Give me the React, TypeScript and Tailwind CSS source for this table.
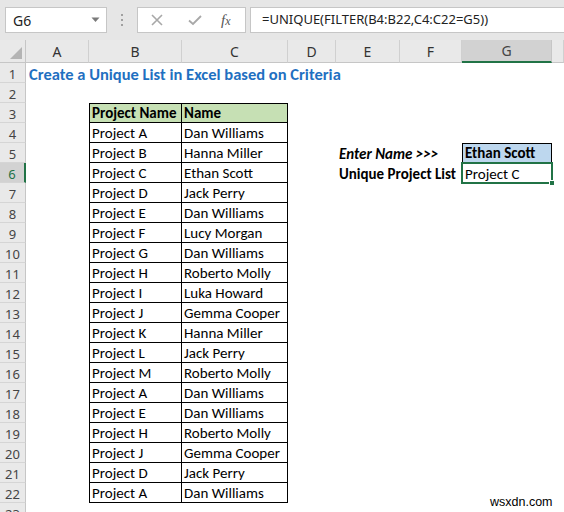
import React from "react";

const COLS = [63, 93, 106, 48, 64, 62, 90, 12];
const LETTERS = ["A", "B", "C", "D", "E", "F", "G", ""];

const data: [string, string][] = [
  ["Project A", "Dan Williams"],
  ["Project B", "Hanna Miller"],
  ["Project C", "Ethan Scott"],
  ["Project D", "Jack Perry"],
  ["Project E", "Dan Williams"],
  ["Project F", "Lucy Morgan"],
  ["Project G", "Dan Williams"],
  ["Project H", "Roberto Molly"],
  ["Project I", "Luka Howard"],
  ["Project J", "Gemma Cooper"],
  ["Project K", "Hanna Miller"],
  ["Project L", "Jack Perry"],
  ["Project M", "Roberto Molly"],
  ["Project A", "Dan Williams"],
  ["Project E", "Dan Williams"],
  ["Project H", "Roberto Molly"],
  ["Project J", "Gemma Cooper"],
  ["Project D", "Jack Perry"],
  ["Project A", "Dan Williams"],
];

const cellFont = { fontFamily: "Carlito, Lato, 'Liberation Sans', sans-serif" };
const uiFont = { fontFamily: "'Segoe UI', 'Noto Sans', 'Open Sans', sans-serif" };

function Cell({
  w,
  className = "",
  children,
}: {
  w: number;
  className?: string;
  children?: React.ReactNode;
}) {
  return (
    <div
      className={`shrink-0 h-[20px] flex items-end pb-[1px] whitespace-nowrap text-[15px] text-black leading-none ${className}`}
      style={{ width: w, ...cellFont }}
    >
      {children}
    </div>
  );
}

function Row({ n }: { n: number }) {
  const selected = n === 6;
  const cells: React.ReactNode[] = [];
  const inTable = n >= 3 && n <= 22;
  for (let i = 0; i < COLS.length; i++) {
    const w = COLS[i];
    let content: React.ReactNode = null;
    let cls = "";
    if (n === 1 && i === 0) {
      content = (
        <span className="pl-[3px] font-bold text-[#1f70c1] text-[16.5px]">
          Create a Unique List in Excel based on Criteria
        </span>
      );
    }
    if (inTable && (i === 1 || i === 2)) {
      cls = "border-black border-r border-b";
      if (i === 1) cls += " border-l";
      if (n === 3) cls += " border-t bg-[#c6e0b4] font-bold";
      else cls += " bg-white";
      const val =
        n === 3
          ? i === 1
            ? "Project Name"
            : "Name"
          : data[n - 4][i - 1];
      content = <span className="pl-[2px]">{val}</span>;
    }
    if (i === 4 && n === 5) {
      content = (
        <span className="pl-[3px] font-bold italic">{"Enter Name >>>"}</span>
      );
    }
    if (i === 4 && n === 6) {
      content = <span className="pl-[3px] font-bold">Unique Project List</span>;
    }
    if (i === 6 && n === 5) {
      cls = "border border-black bg-[#bdd7ee] font-bold";
      content = <span className="pl-[2px]">Ethan Scott</span>;
    }
    if (i === 6 && n === 6) {
      cls = "relative";
      content = (
        <>
          <span className="pl-[3px]">Project C</span>
          <div className="absolute left-[-1px] top-[-1px] w-[92px] h-[22px] border-2 border-[#217346]" />
          <div className="absolute right-[-3px] bottom-[-3px] w-[6px] h-[6px] bg-[#217346] border border-white" />
        </>
      );
    }
    cells.push(
      <Cell key={i} w={w} className={cls}>
        {content}
      </Cell>
    );
  }
  return (
    <div className="flex h-[20px]">
      <div
        className={`shrink-0 w-[26px] h-[20px] flex items-end pb-[1px] justify-center text-[13px] leading-none border-b border-[#d5d5d5] ${
          selected
            ? "bg-[#d2d2d2] text-[#217346] border-r-2 border-r-[#217346]"
            : "bg-[#e9e9e9] text-[#444] border-r border-r-[#c6c6c6]"
        }`}
        style={uiFont}
      >
        {n}
      </div>
      {cells}
    </div>
  );
}

export default function App() {
  const rows = Array.from({ length: 23 }, (_, i) => i + 1);
  return (
    <div className="relative w-[564px] h-[512px] overflow-hidden bg-white">
      {/* Formula bar */}
      <div className="h-[40px] bg-[#e6e6e6] flex items-center" style={uiFont}>
        <div className="ml-[5px] w-[102px] h-[26px] bg-white border border-[#c6c6c6] flex items-center justify-between pl-[7px] pr-[6px]">
          <span className="text-[14px] text-[#222]">G6</span>
          <svg width="9" height="6" viewBox="0 0 9 6">
            <path d="M0.5 0.5 L8.5 0.5 L4.5 5 Z" fill="#7a7a7a" />
          </svg>
        </div>
        <div className="w-[30px] flex flex-col items-center gap-[3px]">
          <div className="w-[2px] h-[2px] bg-[#a0a0a0]" />
          <div className="w-[2px] h-[2px] bg-[#a0a0a0]" />
          <div className="w-[2px] h-[2px] bg-[#a0a0a0]" />
        </div>
        <div className="w-[109px] h-[26px] bg-white border border-[#c6c6c6] flex items-center">
          <svg width="14" height="14" viewBox="0 0 14 14" className="ml-[12px]">
            <path d="M2 2 L12 12 M12 2 L2 12" stroke="#a8a8a8" strokeWidth="1.6" />
          </svg>
          <svg width="16" height="14" viewBox="0 0 16 14" className="ml-[23px]">
            <path d="M2 7.5 L6 11 L14 3" stroke="#a8a8a8" strokeWidth="1.8" fill="none" />
          </svg>
          <span
            className="ml-[18px] text-[15px] italic text-[#555]"
            style={{ fontFamily: "'Liberation Serif', serif" }}
          >
            f<span className="text-[12px]">x</span>
          </span>
        </div>
        <div className="ml-[4px] flex-1 h-[26px] bg-white border border-[#c6c6c6] border-r-0 flex items-center pl-[11px]">
          <span className="text-[13px] text-[#222]">
            =UNIQUE(FILTER(B4:B22,C4:C22=G5))
          </span>
        </div>
      </div>

      {/* Column headers */}
      <div className="flex h-[23px]" style={uiFont}>
        <div className="relative shrink-0 w-[26px] h-[23px] bg-[#e9e9e9] border-r border-b border-[#c6c6c6]">
          <svg width="12" height="12" viewBox="0 0 12 12" className="absolute right-[3px] bottom-[3px]">
            <path d="M12 0 L12 12 L0 12 Z" fill="#b4b4b4" />
          </svg>
        </div>
        {COLS.map((w, i) => (
          <div
            key={i}
            className={`shrink-0 h-[23px] flex items-center justify-center text-[14px] border-r ${
              i === 6
                ? "bg-[#d2d2d2] text-[#444] border-[#c6c6c6] border-b-2 border-b-[#217346]"
                : "bg-[#e9e9e9] text-[#333] border-[#d0d0d0] border-b border-b-[#c6c6c6]"
            }`}
            style={{ width: w }}
          >
            {LETTERS[i]}
          </div>
        ))}
      </div>

      {rows.map((n) => (
        <Row key={n} n={n} />
      ))}

      <div
        className="absolute left-[490px] top-[493px] text-[12.5px] text-black"
        style={{ fontFamily: "'Liberation Sans', Arial, sans-serif" }}
      >
        wsxdn.com
      </div>
    </div>
  );
}
